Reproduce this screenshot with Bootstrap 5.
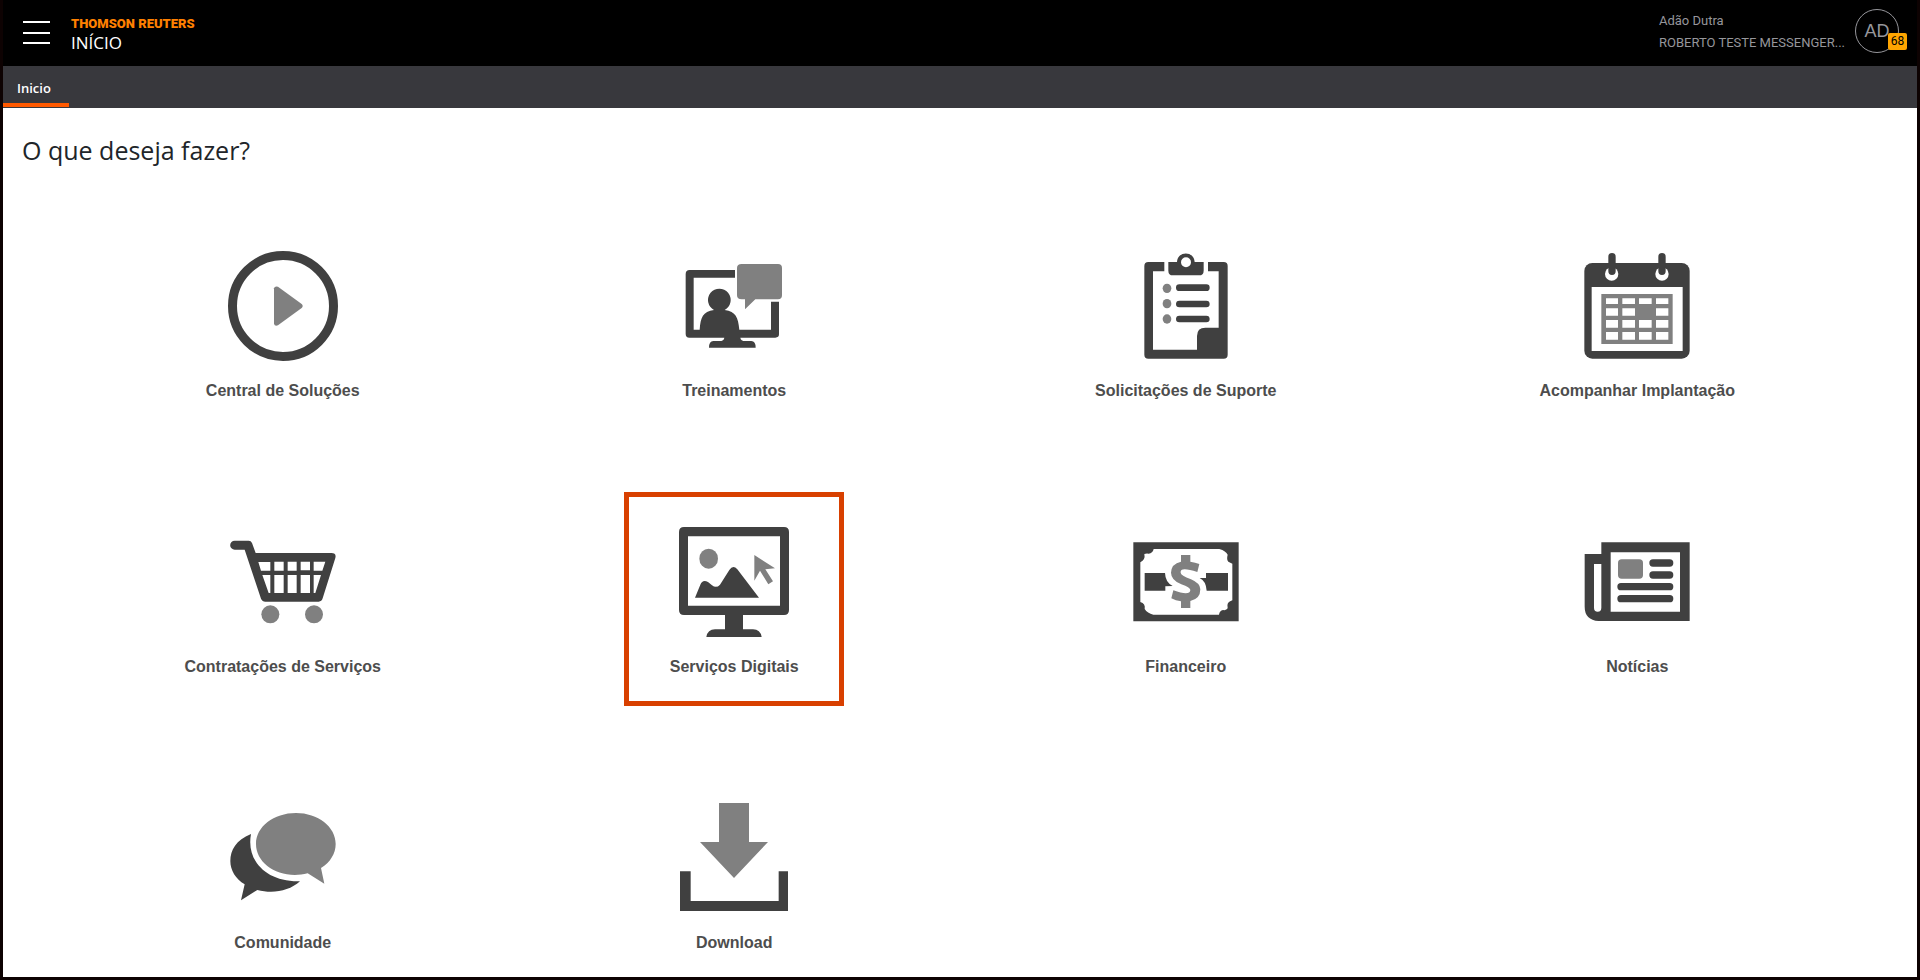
<!DOCTYPE html>
<html lang="pt-BR">
<head>
<meta charset="utf-8">
<meta name="viewport" content="width=device-width, initial-scale=1">
<title>Início</title>
<link href="https://cdn.jsdelivr.net/npm/bootstrap@5.3.0/dist/css/bootstrap.min.css" rel="stylesheet">
<style>
  body { font-family: "Open Sans", sans-serif; border: 3px solid #0d0202; border-top: 0; background: #fff; color: #212529; }
  .topbar { height: 66px; background: #000; padding: 0 18px 0 20px; }
  .menu-btn { width: 27px; height: 24px; line-height: 0; }
  .brand { padding: 3px 0 0 21px; }
  .brand-name { color: #ff8000; font: 900 13px/16px Roboto, sans-serif; }
  .brand-page { color: #fff; font-size: 17px; line-height: 21px; }
  .account { margin: 0 10px 2px 0; color: #96969b; font-family: Roboto, sans-serif; font-size: 13px; line-height: 22px; }
  .avatar { width: 44px; height: 44px; border: 1px solid #96969b; color: #96969b; font: 18px/42px "Liberation Sans", sans-serif; }
  .avatar-count { right: -9px; bottom: 2px; width: 19px; height: 17px; border-radius: 2px; background: #ffa500; color: #000; font: 12px/17px Roboto, sans-serif; }
  .tabbar { height: 42px; background: #38383d; }
  .tab-link { width: 66px; height: 41px; padding: 0 14px; border-bottom: 4px solid #ff5900; font-size: 13px; line-height: 44px; font-weight: 600; }
  .page-title { padding: 24px 19px 0; font-size: 25px; line-height: 36px; font-weight: 400; }
  .tiles { padding: 48px 54px 0; row-gap: 89px; }
  .tile { width: 220px; padding-top: 35px; color: #4d4d4d; font: 700 16px/24px "Liberation Sans", sans-serif; }
  .tile svg { width: 110px; height: 110px; margin-bottom: 18px; }
  .tile-active::after { content: ""; position: absolute; inset: 0 0 -27px; border: 5px solid #d84000; }
  .ink { fill: #404040; } .soft { fill: #808080; } .paper { fill: #fff; }
</style>
</head>
<body class="min-vh-100 d-flex flex-column">
<header>
  <div class="topbar d-flex align-items-center">
    <button type="button" class="menu-btn btn p-0 border-0 rounded-0" aria-label="Menu">
      <svg width="27" height="24" viewBox="0 0 27 24" stroke="#fff" stroke-width="2" aria-hidden="true"><path d="M0 1H27M0 12H27M0 22H27"/></svg>
    </button>
    <div class="brand d-flex flex-column">
      <span class="brand-name">THOMSON REUTERS</span>
      <span class="brand-page">INÍCIO</span>
    </div>
    <div class="account ms-auto">
      <div>Adão Dutra</div>
      <div>ROBERTO TESTE MESSENGER...</div>
    </div>
    <button type="button" class="avatar btn rounded-circle p-0 mb-1 position-relative">AD<span class="avatar-count position-absolute">68</span></button>
  </div>
  <nav class="tabbar"><a href="#" class="tab-link d-block text-white text-decoration-none" aria-current="page">Inicio</a></nav>
</header>
<main>
  <h1 class="page-title mb-0">O que deseja fazer?</h1>
  <div class="tiles row row-cols-2 row-cols-lg-4 gx-0 text-center">
    <div class="col d-flex justify-content-center"><a href="#" class="tile d-flex flex-column align-items-center text-decoration-none">
      <svg viewBox="114 33 330 330" aria-hidden="true"><circle cx="279" cy="198" r="151.500" fill="none" stroke="#404040" stroke-width="27"/><path class="soft" d="M252 145Q254 137 264 140L335 192Q341 198 335 204L264 256Q254 260 252 251Z"/></svg>
      Central de Soluções</a></div>
    <div class="col d-flex justify-content-center"><a href="#" class="tile d-flex flex-column align-items-center text-decoration-none">
      <svg viewBox="117 33 330 330" aria-hidden="true"><path class="ink" d="M285 90V113H161V269H179C182 232 188 215 222 210A34 34 0 1 1 254 210C288 215 294 232 298 269H393V185H417V283Q417 293 406 293H301Q302 303 316 303H334Q347 303 347 323H207Q207 303 220 303H238Q252 303 253 293H148Q137 293 137 282V102Q137 90 149 90Z"/><path class="soft" d="M305 72H414Q426 72 426 84V166Q426 178 414 178H346L315 208V178H305Q291 178 291 166V84Q291 72 305 72Z"/></svg>
      Treinamentos</a></div>
    <div class="col d-flex justify-content-center"><a href="#" class="tile d-flex flex-column align-items-center text-decoration-none">
      <svg viewBox="153 33 330 330" aria-hidden="true"><path class="ink" fill-rule="evenodd" d="M205 66H253V94H219V329H351V288Q351 263 376 263H416V94H384V66H431Q443 66 443 78V344Q443 356 431 356H205Q193 356 193 344V78Q193 66 205 66ZM265 66H291C293 32 342 32 344 66H371V92Q371 106 357 106H279Q265 106 265 92ZM318 52A15 15 0 1 0 318 82A15 15 0 1 0 318 52Z"/><path stroke="#404040" stroke-width="20" stroke-linecap="round" d="M298 143H379M298 192H379M298 237H379"/><g class="soft"><ellipse cx="261" cy="145" rx="13" ry="14"/><ellipse cx="261" cy="191" rx="13" ry="14"/><ellipse cx="261" cy="237" rx="13" ry="14"/></g></svg>
      Solicitações de Suporte</a></div>
    <div class="col d-flex justify-content-center"><a href="#" class="tile d-flex flex-column align-items-center text-decoration-none">
      <svg viewBox="186 33 330 330" aria-hidden="true"><rect class="ink" x="193" y="69" width="316" height="287" rx="24"/><path class="paper" d="M215 141H488V333H215Z"/><circle class="paper" cx="275" cy="102" r="20"/><circle class="paper" cx="426" cy="102" r="20"/><path stroke="#404040" stroke-width="22" stroke-linecap="round" d="M276 50V94M426 50V94"/><path class="soft" d="M244 162H458V312H244Z"/><path class="paper" d="M258 175h36v17h-36zM307 175h38v17h-38zM357 175h38v17h-38zM408 175h37v17h-37zM258 205h36v22h-36zM307 205h38v22h-38zM408 205h37v22h-37zM258 240h36v23h-36zM307 240h38v23h-38zM357 240h38v23h-38zM408 240h37v23h-37zM258 276h36v23h-36zM307 276h38v23h-38zM357 276h38v23h-38zM408 276h37v23h-37z"/></svg>
      Acompanhar Implantação</a></div>
    <div class="col d-flex justify-content-center"><a href="#" class="tile d-flex flex-column align-items-center text-decoration-none">
      <svg viewBox="174 21 330 330" aria-hidden="true"><path class="ink" d="M194 62H236Q243 62 246 69L257 99H484Q500 99 496 114L458 235Q455 245 446 245H286Q277 245 273 236L224 89H194A13 13 0 0 1 194 62Z"/><path class="paper" d="M265 126H301V152H273ZM313 125H341V152H313ZM353 125H380V152H353ZM392 125H420V151H392ZM431 125H466L457 152H431ZM277 165H301V219H296ZM313 165H341V219H313ZM353 165H380V219H353ZM392 165H420V219H392ZM431 165H453L436 219H431Z"/><circle class="soft" cx="301" cy="283" r="27"/><circle class="soft" cx="432" cy="283" r="27"/></svg>
      Contratações de Serviços</a></div>
    <div class="col d-flex justify-content-center"><a href="#" class="tile tile-active position-relative d-flex flex-column align-items-center text-decoration-none">
      <svg viewBox="192 141 330 330" aria-hidden="true"><path class="ink" fill-rule="evenodd" d="M207 141H507Q522 141 522 156V390Q522 405 507 405H384V448H414Q436 448 440 471H274Q278 448 300 448H330V405H207Q192 405 192 390V156Q192 141 207 141ZM219 169V377H495V169Z"/><path class="ink" d="M240 353L256 314Q263 297 279 306L291 316Q304 326 315 314L343 270Q354 253 367 268L432 353Z"/><ellipse class="soft" cx="281" cy="236" rx="28" ry="30"/><path class="soft" d="M418 225L480 265L451 268L474 304L460 313L435 272L418 302Z"/></svg>
      Serviços Digitais</a></div>
    <div class="col d-flex justify-content-center"><a href="#" class="tile d-flex flex-column align-items-center text-decoration-none">
      <svg viewBox="63 21 330 330" aria-hidden="true"><path class="ink" d="M70 67H386V304H70Z"/><path class="paper" d="M131 87H328Q348 93 353 104Q349 119 355 125L367 131V241Q348 246 353 265Q349 272 339 270Q329 272 327 284H130Q112 280 104 267Q107 251 91 246V127Q107 119 103 102Q110 99 116 101Q128 100 131 87Z"/><path class="ink" d="M104 159H165Q166 187 188 198L166 199V212H104ZM269 174H288V159H354V212H290Q288 183 269 174Z"/><path class="soft" d="M213 105H241V125Q256 127 268 132L262 156Q209 139 212 158Q212 166 243 178Q271 190 271 208Q271 237 241 243V264H213V244Q197 242 184 235L190 211Q240 229 241 210Q241 203 214 193Q183 180 183 158Q184 131 213 125Z"/></svg>
      Financeiro</a></div>
    <div class="col d-flex justify-content-center"><a href="#" class="tile d-flex flex-column align-items-center text-decoration-none">
      <svg viewBox="66 21 330 330" aria-hidden="true"><path class="ink" fill-rule="evenodd" d="M124 67H389V303H116Q74 300 74 260V102H124ZM152 97V275H360V97ZM102 132V263A11 12 0 0 0 124 263V132Z"/><rect class="soft" x="174" y="118" width="75" height="58" rx="11"/><path stroke="#404040" stroke-width="22" stroke-linecap="round" d="M279 129H329M279 165H329M183 200H329M183 236H329"/></svg>
      Notícias</a></div>
    <div class="col d-flex justify-content-center"><a href="#" class="tile d-flex flex-column align-items-center text-decoration-none">
      <svg viewBox="54 39 330 330" aria-hidden="true"><path class="ink" d="M123 132C78 150 61 180 61 213C61 241 77 267 104 283L93 331L142 300C188 312 237 304 270 274C168 277 108 211 123 132Z"/><path class="soft" d="M258 69C324 69 377 110 377 162C377 190 361 217 333 234L343 281L293 250C212 270 138 224 138 162C138 110 191 69 258 69Z"/></svg>
      Comunidade</a></div>
    <div class="col d-flex justify-content-center"><a href="#" class="tile d-flex flex-column align-items-center text-decoration-none">
      <svg viewBox="57 39 330 330" aria-hidden="true"><path class="soft" d="M177 39H267V156H324L222 264L120 156H177Z"/><path class="ink" d="M60 244H92V333H356V244H384V363H60Z"/></svg>
      Download</a></div>
  </div>
</main>
<script src="https://cdn.jsdelivr.net/npm/bootstrap@5.3.0/dist/js/bootstrap.bundle.min.js"></script>
</body>
</html>
